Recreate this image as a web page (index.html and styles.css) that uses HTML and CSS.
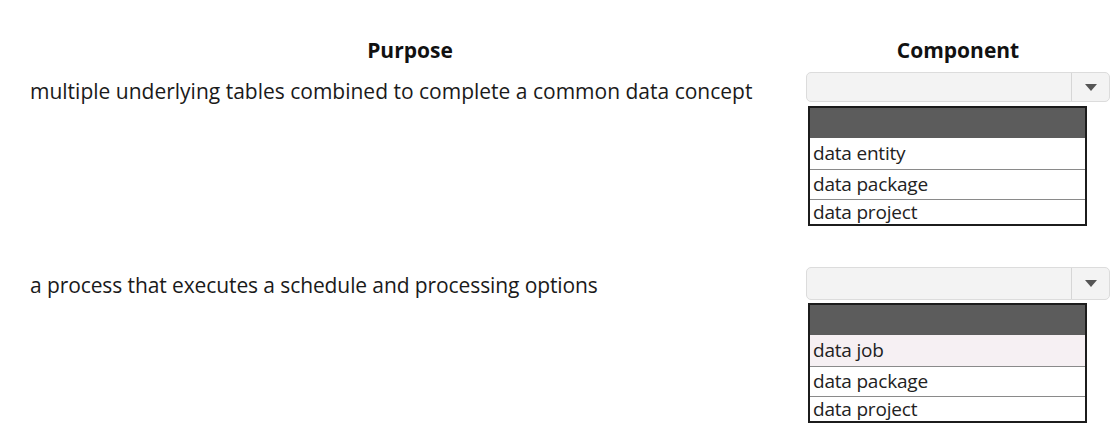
FILE: index.html
```html
<!DOCTYPE html>
<html lang="en">
<head>
  <meta charset="UTF-8" />
  <title>Purpose / Component</title>
  <link rel="stylesheet" href="styles.css">
</head>
<body>
  <div class="match">
    <div class="head purpose-head">Purpose</div>
    <div class="head">Component</div>

    <div class="purpose">multiple underlying tables combined to complete a common data concept</div>
    <div class="pick">
      <div class="combo"><span class="combo-value"></span><span class="combo-arrow"></span></div>
      <ul class="options">
        <li class="blank"></li>
        <li>data entity</li>
        <li>data package</li>
        <li>data project</li>
      </ul>
    </div>

    <div class="purpose narrow">a process that executes a schedule and processing options</div>
    <div class="pick">
      <div class="combo"><span class="combo-value"></span><span class="combo-arrow"></span></div>
      <ul class="options">
        <li class="blank"></li>
        <li class="hover">data job</li>
        <li>data package</li>
        <li>data project</li>
      </ul>
    </div>
  </div>
</body>
</html>
```

FILE: styles.css
```css
body {
  font-family: 'Open Sans', 'Noto Sans', sans-serif;
  background: #fff;
  color: #1a1a1a;
  margin: 0;
  padding: 38px 9px 0 30px;
}
.match {
  display: grid;
  grid-template-columns: 760px 304px;
  column-gap: 16px;
  row-gap: 10px;
  align-items: start;
}
.head {
  font-weight: bold;
  font-size: 21px;
  line-height: 24px;
  text-align: center;
  color: #111;
}
.purpose {
  font-size: 21px;
  line-height: 30px;
  padding-top: 4px;
  white-space: nowrap;
}
.narrow {
  letter-spacing: -0.1px;
  padding-top: 3px;
}
.pick {
  margin-bottom: 31px;
}
.pick:last-child {
  margin-bottom: 0;
}
.combo {
  display: flex;
  height: 28px;
  border: 1px solid #dcdcdc;
  border-radius: 5px;
  background: #f3f3f3;
}
.pick:last-child .combo {
  height: 31px;
}
.combo-value {
  flex: 1;
}
.combo-arrow {
  width: 37px;
  border-left: 1px solid #d6d6d6;
  display: flex;
  align-items: center;
  justify-content: center;
}
.combo-arrow::after {
  content: "";
  border-left: 6px solid transparent;
  border-right: 6px solid transparent;
  border-top: 7px solid #555;
}
.options {
  list-style: none;
  margin: 4px 0 0 2px;
  padding: 0;
  width: 275px;
  border: 2px solid #1c1c1c;
}
.pick:last-child .options {
  margin-top: 3px;
}
.options li {
  height: 29px;
  line-height: 28px;
  padding-left: 3px;
  font-size: 19px;
  color: #222;
  border-top: 1px solid #8a8a8a;
  letter-spacing: -0.2px;
}
.options li.blank {
  height: 30px;
  background: #5c5c5c;
  border-top: none;
}
.options li.blank + li {
  height: 31px;
  line-height: 31px;
  border-top: none;
}
.options li:last-child {
  height: 24px;
  line-height: 24px;
}
.options li.hover {
  background: #f6f0f3;
}
```
